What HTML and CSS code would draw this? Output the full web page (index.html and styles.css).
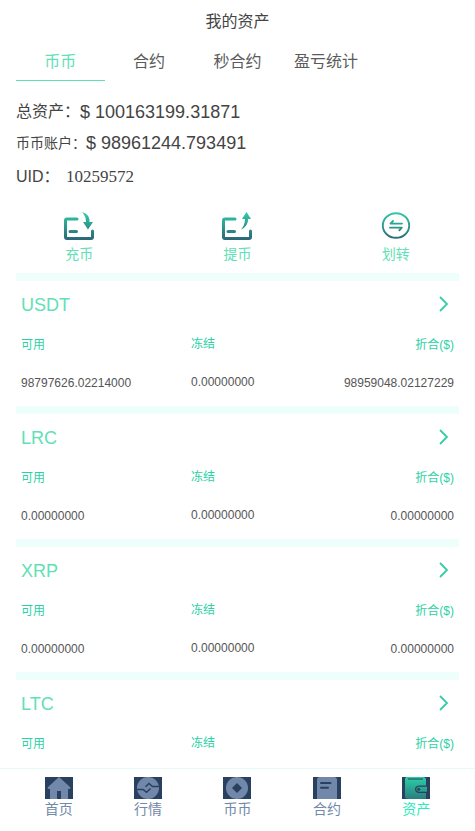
FILE: index.html
```html
<!DOCTYPE html>
<html lang="zh-CN">
<head>
<meta charset="utf-8">
<title>我的资产</title>
<link rel="stylesheet" href="styles.css">
</head>
<body>
<svg class="defs" width="0" height="0">
  <defs>
    <linearGradient id="teal" x1="0" y1="0" x2="0" y2="30" gradientUnits="userSpaceOnUse">
      <stop offset="0" stop-color="#2fd0a8"/><stop offset="1" stop-color="#2b6374"/>
    </linearGradient>
    <linearGradient id="wallet" x1="0" y1="0" x2="0" y2="22" gradientUnits="userSpaceOnUse">
      <stop offset="0" stop-color="#2bd0a6"/><stop offset="1" stop-color="#2b7d80"/>
    </linearGradient>
  </defs>
</svg>
<div class="app">
  <h1 class="title">我的资产</h1>
  <nav class="tabs">
    <a class="tab active">币币</a><a class="tab">合约</a><a class="tab">秒合约</a><a class="tab">盈亏统计</a>
  </nav>
  <section class="summary">
    <p class="line">总资产：<span class="money">$ 100163199.31871</span></p>
    <p class="line account">币币账户：<span class="money">$ 98961244.793491</span></p>
    <p class="line uid">UID： <span class="uid-number">10259572</span></p>
  </section>
  <section class="actions">
    <a class="action">
      <svg width="32" height="30" viewBox="0 0 32 30" fill="none" stroke="url(#teal)" stroke-width="3" stroke-linecap="round" stroke-linejoin="round">
        <path d="M14 8H4Q2.500 8 2.500 9.500V26Q2.500 27.500 4 27.500H28Q29.500 27.500 29.500 26V20M7 20.500h6.500"/>
        <path d="M19 1Q27 3.500 26.500 11H30L25 18.500L20 11H23Q23 5 19 1Z" fill="url(#teal)" stroke="none"/>
      </svg>
      <span>充币</span>
    </a>
    <a class="action">
      <svg width="32" height="30" viewBox="0 0 32 30" fill="none" stroke="url(#teal)" stroke-width="3" stroke-linecap="round" stroke-linejoin="round">
        <path d="M14 8H4Q2.500 8 2.500 9.500V26Q2.500 27.500 4 27.500H28Q29.500 27.500 29.500 26V20M7 20.500h6.500"/>
        <path d="M20 18.500Q27.500 15 27 8H30L25.500 1L21 8H24Q24 14 20 18.500Z" fill="url(#teal)" stroke="none"/>
      </svg>
      <span>提币</span>
    </a>
    <a class="action">
      <svg width="32" height="30" viewBox="0 0 32 30" fill="none" stroke="url(#teal)" stroke-width="1.900" stroke-linecap="round" stroke-linejoin="round">
        <ellipse cx="16" cy="14.500" rx="13.200" ry="12.300"/>
        <path d="M22 12.600H10.500L13 10M10 16.600H21.800L19.300 19.300"/>
      </svg>
      <span>划转</span>
    </a>
  </section>
  <section class="assets">
    <article class="asset">
      <header class="asset-head"><h2>USDT</h2><svg width="12" height="18" viewBox="0 0 12 18"><path d="M2 2l7 7-7 7"/></svg></header>
      <dl class="figures">
        <div><dt>可用</dt><dd>98797626.02214000</dd></div>
        <div class="frozen"><dt>冻结</dt><dd>0.00000000</dd></div>
        <div class="worth"><dt>折合($)</dt><dd>98959048.02127229</dd></div>
      </dl>
    </article>
    <article class="asset">
      <header class="asset-head"><h2>LRC</h2><svg width="12" height="18" viewBox="0 0 12 18"><path d="M2 2l7 7-7 7"/></svg></header>
      <dl class="figures">
        <div><dt>可用</dt><dd>0.00000000</dd></div>
        <div class="frozen"><dt>冻结</dt><dd>0.00000000</dd></div>
        <div class="worth"><dt>折合($)</dt><dd>0.00000000</dd></div>
      </dl>
    </article>
    <article class="asset">
      <header class="asset-head"><h2>XRP</h2><svg width="12" height="18" viewBox="0 0 12 18"><path d="M2 2l7 7-7 7"/></svg></header>
      <dl class="figures">
        <div><dt>可用</dt><dd>0.00000000</dd></div>
        <div class="frozen"><dt>冻结</dt><dd>0.00000000</dd></div>
        <div class="worth"><dt>折合($)</dt><dd>0.00000000</dd></div>
      </dl>
    </article>
    <article class="asset">
      <header class="asset-head"><h2>LTC</h2><svg width="12" height="18" viewBox="0 0 12 18"><path d="M2 2l7 7-7 7"/></svg></header>
      <dl class="figures">
        <div><dt>可用</dt></div>
        <div class="frozen"><dt>冻结</dt></div>
        <div class="worth"><dt>折合($)</dt></div>
      </dl>
    </article>
  </section>
  <nav class="bottom">
    <a class="item">
      <svg width="28" height="22" viewBox="0 0 28 22"><path class="glyph" d="M14 0L25.500 10.500Q25.500 12 24 12H23V22H16V14H12V22H5V12H4Q2.500 12 2.500 10.500Z"/></svg>
      <span>首页</span>
    </a>
    <a class="item">
      <svg width="28" height="22" viewBox="0 0 28 22"><ellipse class="glyph" cx="14" cy="11" rx="11" ry="11"/><path class="cut" d="M3 12.500H9L12.500 15.200L16.500 11.500M11.500 9.800L15 6.500L18.500 9.500H25"/></svg>
      <span>行情</span>
    </a>
    <a class="item">
      <svg width="28" height="22" viewBox="0 0 28 22"><ellipse class="glyph" cx="14" cy="11" rx="11" ry="11"/><path class="hole" d="M14 6L19 11L14 16L9 11Z"/></svg>
      <span>币币</span>
    </a>
    <a class="item">
      <svg width="28" height="22" viewBox="0 0 28 22"><path class="glyph" d="M7 0H21Q24 0 24 3V22H4V3Q4 0 7 0Z"/><path class="cut lines" d="M8 6H17.500M8 10.700H15"/></svg>
      <span>合约</span>
    </a>
    <a class="item current">
      <svg width="28" height="22" viewBox="0 0 28 22"><path fill="url(#wallet)" d="M5 0H21Q24 0 24 3V22H6Q3 22 3 19V2Q3 0 5 0Z"/><path class="cut rim" d="M6 2H21"/><path class="hole" d="M17 8.500H25V16H17Q13 15.500 13 12.200Q13 9 17 8.500Z"/><path fill="url(#wallet)" d="M17 9.700H25V14.800H17Q14.300 14.500 14.300 12.200Q14.300 10 17 9.700Z"/><circle class="hole" cx="16.700" cy="12.200" r="1.500"/></svg>
      <span>资产</span>
    </a>
  </nav>
</div>
</body>
</html>
```
FILE: styles.css
```css
* { box-sizing: border-box; margin: 0; padding: 0; }
body {
  background: #fff;
  color: #444;
  font-family: "Liberation Sans", "Noto Sans CJK SC", sans-serif;
  font-weight: 400;
  overflow: hidden;
}
.defs { display: block; height: 0; }
.app { height: 831px; display: flex; flex-direction: column; overflow: hidden; }
.title { height: 42px; flex: none; line-height: 44px; font-size: 16px; font-weight: 400; text-align: center; }
.tabs { flex: none; display: grid; grid-template-columns: repeat(5, 1fr); height: 39px; margin: 0 16px; }
.tab { line-height: 40px; font-size: 16px; text-align: center; color: #5a5a5a; height: 39px; }
.tab.active { color: #61dfb5; border-bottom: 1px solid #61dfb5; }
.summary { flex: none; height: 123px; padding: 15px 16px 0; }
.line { height: 31px; line-height: 32px; font-size: 16px; display: flex; white-space: pre; }
.line.account { font-size: 14px; height: 32px; }
.line.uid { line-height: 36px; }
.money { font-size: 18px; }
.uid-number { font-family: "Liberation Serif", serif; font-size: 17px; margin-left: 2px; }
.actions { flex: none; height: 69px; display: grid; grid-template-columns: repeat(3, 1fr); padding-top: 7px; }
.action { display: flex; flex-direction: column; align-items: center; font-size: 14px; line-height: 26px; color: #61dfb5; }
.action svg { flex: none; }
.assets { flex: 1; min-height: 0; margin: 0 16px; overflow: hidden; }
.asset { height: 133px; border-top: 8px solid #edfefb; padding: 8px 5px 0; }
.asset-head { display: flex; justify-content: space-between; height: 32px; line-height: 32px; color: #61dfb5; }
.asset-head h2 { font-size: 18px; font-weight: 400; }
.asset-head svg { margin: 6px 4px 0 0; fill: none; stroke: #35cda6; stroke-width: 1.8; }
.figures { display: grid; grid-template-columns: 170px 1fr 1fr; font-size: 12px; padding-top: 15px; }
.figures dt { height: 39px; line-height: 18px; color: #2bd1a5; }
.figures dd { line-height: 16px; color: #555; }
.frozen { margin-top: -1px; }
.worth { text-align: right; }
.bottom { flex: none; height: 63px; border-top: 1px solid #e6faf6; padding: 8px 14px 0; display: grid; grid-template-columns: repeat(5, 1fr); }
.item { display: flex; flex-direction: column; align-items: center; font-size: 14px; line-height: 20px; color: #7188aa; }
.item svg { flex: none; background: #29415f; }
.item.current { color: #2deabb; }
.glyph { fill: #7188aa; }
.hole { fill: #29415f; }
.cut { fill: none; stroke: #29415f; stroke-width: 1.5; }
.rim { stroke-width: 1; }
.lines { stroke-width: 2; stroke-linecap: round; }
```
